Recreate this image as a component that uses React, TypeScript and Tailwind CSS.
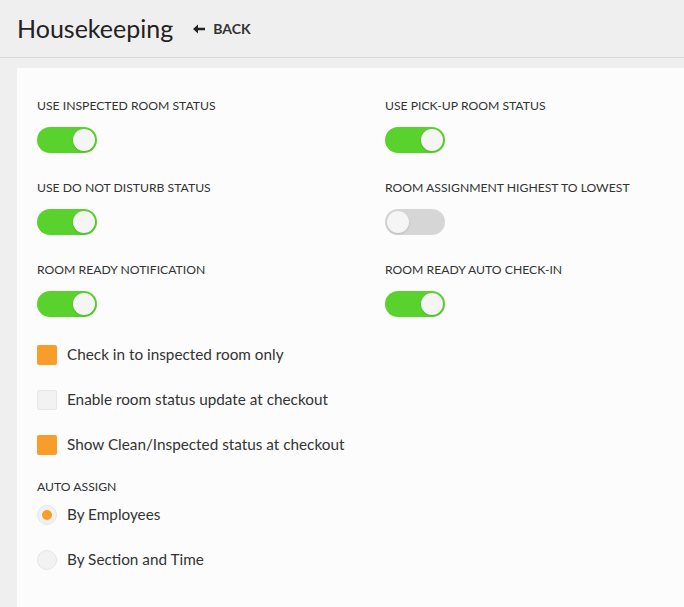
import React, { useState } from "react";

function Toggle({ on }: { on: boolean }) {
  return (
    <div
      className={
        "w-[60px] h-[26px] rounded-full p-[2px] flex " +
        (on ? "bg-[#5ad22d] justify-end" : "bg-[#d6d6d6] justify-start")
      }
    >
      <div className="w-[22px] h-[22px] rounded-full bg-[#f5f5f5] shadow-sm" />
    </div>
  );
}

function ToggleField({ label, on }: { label: string; on: boolean }) {
  return (
    <div className="h-[82px]">
      <div className="text-[12.2px] text-[#333] leading-[16px] pt-[30px]">{label}</div>
      <div className="mt-[13px]">
        <Toggle on={on} />
      </div>
    </div>
  );
}

function Check({ label, checked }: { label: string; checked: boolean }) {
  return (
    <div className="flex items-center gap-[10px] h-[45px]">
      <div
        className={
          "w-[20px] h-[20px] rounded-[2px] " +
          (checked ? "bg-[#f89c2a]" : "bg-[#f2f2f2] border border-[#e6e6e6]")
        }
      />
      <span className="text-[15.3px] text-[#333]">{label}</span>
    </div>
  );
}

function Radio({ label, checked }: { label: string; checked: boolean }) {
  return (
    <div className="flex items-center gap-[10px] h-[45px]">
      <div className="w-[20px] h-[20px] rounded-full bg-[#f2f2f2] border border-[#e6e6e6] flex items-center justify-center">
        {checked && <div className="w-[10px] h-[10px] rounded-full bg-[#f89c2a]" />}
      </div>
      <span className="text-[15.3px] text-[#333]">{label}</span>
    </div>
  );
}

export default function App() {
  const [mode] = useState("employees");
  return (
    <div
      className="min-h-screen bg-[#efefef]"
      style={{ fontFamily: "Lato, 'Noto Sans', sans-serif" }}
    >
      <div className="h-[58px] flex items-center px-[17px] border-b border-[#d8d8d8]">
        <h1 className="text-[25px] text-[#222] leading-none">Housekeeping</h1>
        <div className="ml-[20px] flex items-center gap-[8px] text-[14px] font-bold text-[#333]">
          <svg width="12" height="10" viewBox="0 0 12 10">
            <path d="M0 5 L5 0.5 L5 3.7 L12 3.7 L12 6.3 L5 6.3 L5 9.5 Z" fill="#222" />
          </svg>
          BACK
        </div>
      </div>
      <div className="pt-[10px] pl-[17px]">
        <div className="bg-[#fcfcfc] min-h-[538px] pl-[20px] pb-[30px]">
          <div className="grid grid-cols-[348px_1fr]">
            <ToggleField label="USE INSPECTED ROOM STATUS" on />
            <ToggleField label="USE PICK-UP ROOM STATUS" on />
            <ToggleField label="USE DO NOT DISTURB STATUS" on />
            <ToggleField label="ROOM ASSIGNMENT HIGHEST TO LOWEST" on={false} />
            <ToggleField label="ROOM READY NOTIFICATION" on />
            <ToggleField label="ROOM READY AUTO CHECK-IN" on />
          </div>
          <div className="mt-[18px]">
            <Check label="Check in to inspected room only" checked />
            <Check label="Enable room status update at checkout" checked={false} />
            <Check label="Show Clean/Inspected status at checkout" checked />
          </div>
          <div className="text-[12.2px] text-[#333] mt-[11px]">AUTO ASSIGN</div>
          <div className="-mt-[4px]">
            <Radio label="By Employees" checked={mode === "employees"} />
            <Radio label="By Section and Time" checked={mode === "section"} />
          </div>
        </div>
      </div>
    </div>
  );
}
